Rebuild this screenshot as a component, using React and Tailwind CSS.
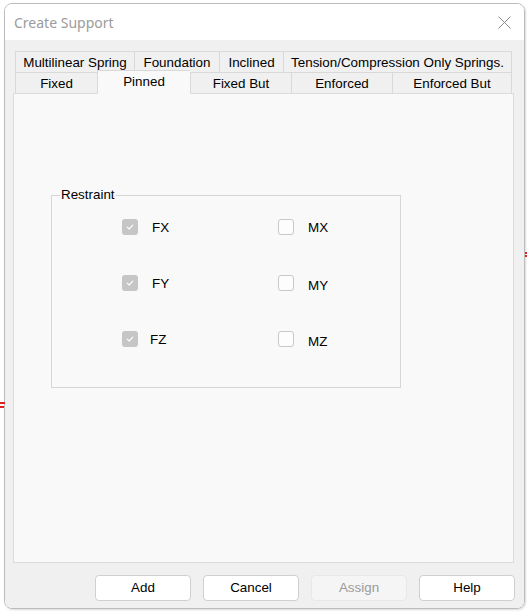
import React from 'react';

const topTabs = [
    { label: 'Multilinear Spring', w: 'w-[119px]' },
    { label: 'Foundation', w: 'w-[85px]' },
    { label: 'Inclined', w: 'w-[64px]' },
    { label: 'Tension/Compression Only Springs.', w: 'w-[229px]' },
];

const bottomTabs = [
    { label: 'Fixed', w: 'w-[82px]' },
    { label: 'Pinned', w: 'w-[93px]', active: true },
    { label: 'Fixed But', w: 'w-[101px]' },
    { label: 'Enforced', w: 'w-[101px]' },
    { label: 'Enforced But', w: 'w-[120px]' },
];

const restraints = [
    [{ label: 'FX', checked: true, gap: 'ml-[14px] mt-[1px]' }, { label: 'MX', gap: 'ml-[14px] mt-[1px]' }],
    [{ label: 'FY', checked: true, gap: 'ml-[14px] mt-[1px]' }, { label: 'MY', gap: 'ml-[14px] mt-[3px]' }],
    [{ label: 'FZ', checked: true, gap: 'ml-[12px] mt-[1px]' }, { label: 'MZ', gap: 'ml-[14px] mt-[3px]' }],
];

function CheckBox({ checked }) {
    if (checked) {
        return (
            <div className="w-[16px] h-[16px] rounded-[3px] bg-[#c6c6c6] flex items-center justify-center">
                <svg width="10" height="10" viewBox="0 0 10 10" fill="none" stroke="#ffffff" strokeWidth="1.1" strokeLinecap="round" strokeLinejoin="round">
                    <path d="M2.2 5.2 L4.2 7 L7.8 3.2" />
                </svg>
            </div>
        );
    }
    return <div className="w-[16px] h-[16px] rounded-[3px] bg-[#fdfdfd] border border-[#c8c8c8]"></div>;
}

function Tab({ label, w, last, active }) {
    if (active) {
        return (
            <div className={`${w} h-[24px] -mb-[1px] relative z-10 flex justify-center pt-[1px] bg-[#f9f9f9] border-t border-l border-[#d9d9d9]`}>
                {label}
            </div>
        );
    }
    return (
        <div className={`${w} h-[21px] flex items-center justify-center pt-[2px] bg-[#f0f0f0] border-t border-l border-[#d9d9d9] ${last ? 'border-r' : ''}`}>
            {label}
        </div>
    );
}

function Button({ children, disabled }) {
    return (
        <button
            disabled={disabled}
            className={`w-[96px] h-[26px] rounded-[4px] border text-[13.4px] ${
                disabled
                    ? 'bg-[#f5f5f5] border-[#e8e8e8] text-[#9a9a9a]'
                    : 'bg-white border-[#d0d0d0] text-black'
            }`}
        >
            {children}
        </button>
    );
}

export default function App() {
    return (
        <div className="relative w-[527px] h-[612px] bg-white pt-[3px] pl-[4px] font-['Liberation_Sans',Arial,sans-serif] text-[13.4px] text-black">
            {/* dialog window */}
            <div className="w-[521px] h-[606px] flex flex-col rounded-[8px] border border-[#bcbcbc] overflow-hidden shadow-[1px_1px_2px_rgba(0,0,0,0.15)]">
                {/* title bar */}
                <div className="h-[36px] bg-white flex items-center justify-between pl-[9px] pr-[13px]">
                    <span className="font-['Noto_Sans',sans-serif] text-[14px] text-[#9b9b9b] pt-[1px]">Create Support</span>
                    <svg width="13" height="13" viewBox="0 0 13 13" stroke="#8a8a8a" strokeWidth="1">
                        <path d="M0.5 0.5 L12.5 12.5 M12.5 0.5 L0.5 12.5" />
                    </svg>
                </div>

                <div className="flex-1 bg-[#f0f0f0] flex flex-col pl-[8px] pt-[11px]">
                    {/* tabs */}
                    <div className="ml-[2px] flex">
                        {topTabs.map((t, i) => (
                            <Tab key={t.label} {...t} last={i === topTabs.length - 1} />
                        ))}
                    </div>
                    <div className="ml-[2px] flex items-end h-[21px]">
                        {bottomTabs.map((t, i) => (
                            <Tab key={t.label} {...t} last={i === bottomTabs.length - 1} />
                        ))}
                    </div>

                    {/* tab page */}
                    <div className="w-[501px] h-[470px] bg-[#f9f9f9] border border-[#dcdcdc] pl-[37px] pt-[101px]">
                        <div className="relative w-[350px] h-[193px] border border-[#d6d6d6] pt-[23px] pl-[70px]">
                            <span className="absolute left-[8px] -top-[9px] px-[1px] bg-[#f9f9f9] leading-[16px]">Restraint</span>
                            <div className="flex flex-col gap-[40px]">
                                {restraints.map((row, r) => (
                                    <div key={r} className="grid grid-cols-[156px_100px] h-[16px]">
                                        {row.map((c) => (
                                            <div key={c.label} className="flex items-start">
                                                <CheckBox checked={c.checked} />
                                                <span className={`${c.gap} leading-[16px]`}>{c.label}</span>
                                            </div>
                                        ))}
                                    </div>
                                ))}
                            </div>
                        </div>
                    </div>

                    {/* buttons */}
                    <div className="mt-[12px] flex justify-end gap-[12px] pr-[9px]">
                        <Button>Add</Button>
                        <Button>Cancel</Button>
                        <Button disabled>Assign</Button>
                        <Button>Help</Button>
                    </div>
                </div>
            </div>

            {/* stray red marks outside the window */}
            <div className="absolute left-0 top-[402px] flex flex-col gap-[2px]">
                <div className="w-[5px] h-[2px] bg-[#e02020]"></div>
                <div className="w-[4px] h-[2px] bg-[#e02020]"></div>
            </div>
            <div className="absolute left-[525px] top-[252px] flex flex-col gap-[1px]">
                <div className="w-[2px] h-[2px] bg-[#e02020]"></div>
                <div className="w-[2px] h-[2px] bg-[#e02020]"></div>
            </div>
        </div>
    );
}
